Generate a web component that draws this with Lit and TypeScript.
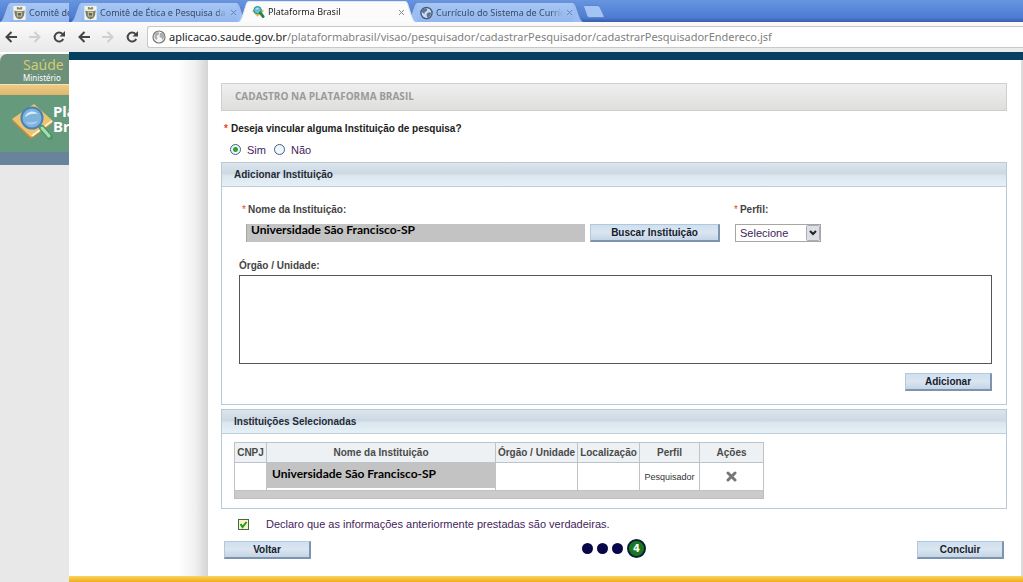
import { LitElement, html, css, svg, nothing } from "lit";
import { customElement, property, state } from "lit/decorators.js";
import { classMap } from "lit/directives/class-map.js";

const crest = html`<svg class="icon" viewBox="0 0 14 16" aria-hidden="true">
  <rect width="14" height="16" fill="#f1f2ea" />
  <path d="M4 1h2v1h2V1h2v3H4z" fill="#8d8a63" />
  <path d="M1 5l3 1h6l3-1-1 6-2 3-3 1-3-1-2-3z" fill="#7b7c6a" />
  <rect x="4" y="7" width="6" height="5" fill="#d9cf8f" />
  <path d="M5 8h4v3H5z" fill="#5b6673" />
</svg>`;

const globe = html`<svg class="icon" viewBox="0 0 14 14" aria-hidden="true">
  <circle cx="7" cy="7" r="6" fill="#c9dcf6" stroke="#46597a" stroke-width="1.5" />
  <path d="M3 3l3-1 2 1-1 2-2 1v2l-2-1-1-2zM8 7l3-1 1 2-2 3-2 1-1-3z" fill="#5e7494" />
</svg>`;

const pageGlobe = html`<svg class="page-icon" viewBox="0 0 14 14" aria-hidden="true">
  <circle cx="7" cy="7" r="6" fill="#f6f6f6" stroke="#777" stroke-width="1.2" />
  <path d="M2.500 4l3-2 2 1-1 2-2 1 1 2-1 2-2-2zM8 3l3 0 1.500 4-2 3-1-2-2-1z" fill="#adadad" />
</svg>`;

const magnifier = svg`
  <path d="M1 17L23 2l19 17-22 16z" fill="#c58c3c" />
  <path d="M1 15L23 0l19 17-22 16z" fill="#ecc470" />
  <path d="M21 32l20-15" stroke="#fff3c8" stroke-width="2" />
  <path d="M31 24l8 9" stroke="#4a9867" stroke-width="6" stroke-linecap="round" />
  <path d="M31 24l7 8" stroke="#a9dcb2" stroke-width="3" stroke-linecap="round" />
  <circle cx="21" cy="14" r="10.500" fill="#7eb3dd" stroke="#4a81b4" stroke-width="2" />
  <path d="M14 13c1-5 8-8 13-3-5-1-9 0-13 3z" fill="#d8ecfa" />
  <path d="M15 18c4 4 9 3 12-1-4 1-8 2-12 1z" fill="#a9d0ee" />`;

const brasil = html`<svg class="icon" viewBox="0 0 14 14" aria-hidden="true">
  <path d="M0 6l6-5 7 5-7 6z" fill="#e7b93f" />
  <circle cx="6" cy="5" r="4" fill="#5fc0d8" stroke="#1f8f88" />
  <path d="M9 8l3 4" stroke="#23824a" stroke-width="3" stroke-linecap="round" />
  <path d="M4 4l3-1" stroke="#e0f6fb" />
</svg>`;

interface Tab {
  title: string;
  icon: unknown;
  active?: boolean;
}

@customElement("browser-window")
export class BrowserWindow extends LitElement {
  @property({ attribute: false }) tabs: Tab[] = [];
  @property() host = "";
  @property() path = "";
  @property({ type: Boolean }) inset = false;

  static styles = css`
    :host { display: flex; flex-direction: column; min-width: 0; overflow: hidden; }
    .strip { display: flex; align-items: flex-end; height: 22px; padding-left: 2px; box-sizing: border-box;
      background: linear-gradient(#6795e0, #4c7bd2 18px, #3c62b0 21px); }
    .inset .strip { padding-left: 0; }
    .tab { display: flex; flex: 0 0 176px; min-width: 0; height: 20px; margin-right: -8px; padding: 0; border: 0; background: none;
      font: 9px/18px "Noto Sans", sans-serif; color: #3a4a63; text-align: left; }
    .tab.active { z-index: 1; height: 21px; color: #222; }
    .edge { flex: 0 0 10px; height: 100%; display: block; }
    .body { flex: 1; min-width: 0; display: flex; align-items: center; height: 100%; box-sizing: border-box;
      border-top: 1px solid #6f92cc; background: linear-gradient(#a5c6f5, #92b6ee); gap: 3px; padding-left: 3px; }
    .active .body { background: #fbfbfb; border-color: #dfe7f3; }
    .icon { flex: 0 0 13px; height: 14px; }
    .name { flex: 1; min-width: 0; overflow: hidden; white-space: nowrap;
      -webkit-mask-image: linear-gradient(to left, transparent, #000 12px); mask-image: linear-gradient(to left, transparent, #000 12px); }
    .x { flex: 0 0 7px; height: 7px; }
    .new { width: 22px; height: 13px; padding: 0; border: 0; margin: 0 0 4px 8px; background: none; flex: none; }
    .new svg { display: block; }
    .bar { display: flex; align-items: center; height: 30px; padding-left: 9px; box-sizing: border-box;
      background: linear-gradient(#fafafa, #e9e9e9); }
    .inset .bar { padding-left: 5px; }
    .nav { padding: 0; border: 0; background: none; width: 12px; height: 12px; margin-right: 12px; flex: none; }
    .nav svg { display: block; }
    .address { flex: 1; min-width: 0; display: flex; align-items: center; height: 22px; box-sizing: border-box;
      margin-left: -3px; padding-left: 4px; background: #fff; border: 1px solid #c9c9c9; border-right: 0; border-radius: 3px 0 0 3px;
      font: 11px/18px "Noto Sans", sans-serif; color: #222; }
    .page-icon { flex: 0 0 14px; height: 14px; margin-right: 3px; }
    .path { flex: 1; min-width: 0; padding: 0; border: 0; outline: 0; background: none; font: inherit; color: #808080; }
    ::slotted(*) { flex: 1; }
  `;

  private renderTab(t: Tab) {
    const fill = t.active ? "#fbfbfb" : "#9bbdf1";
    const line = t.active ? "#dfe7f3" : "#5f83c2";
    return html`<button class=${classMap({ tab: true, active: !!t.active })} role="tab" aria-selected=${t.active ? "true" : "false"}>
      <svg class="edge" viewBox="0 0 10 20" preserveAspectRatio="none" aria-hidden="true">
        <path d="M0 20C2 19 3 16 4 13L7 4Q8 .5 10 .5V20z" fill=${fill} /><path d="M0 20C2 19 3 16 4 13L7 4Q8 .5 10 .5" fill="none" stroke=${line} />
      </svg>
      <span class="body">${t.icon}<span class="name">${t.title}</span>
        <svg class="x" viewBox="0 0 7 7" aria-hidden="true"><path d="M1 1l5 5M6 1L1 6" stroke=${t.active ? "#8b8b8b" : "#6f87ae"} /></svg>
      </span>
      <svg class="edge" viewBox="0 0 10 20" preserveAspectRatio="none" aria-hidden="true">
        <path d="M10 20C8 19 7 16 6 13L3 4Q2 .5 0 .5V20z" fill=${fill} /><path d="M10 20C8 19 7 16 6 13L3 4Q2 .5 0 .5" fill="none" stroke=${line} />
      </svg>
    </button>`;
  }

  render() {
    return html`<div class=${classMap({ inset: this.inset })}>
        <div class="strip" role="tablist">
          ${this.tabs.map((t) => this.renderTab(t))}
          ${this.inset ? nothing : html`<button class="new" aria-label="+">
            <svg width="22" height="13" viewBox="0 0 22 13"><path d="M.5 1.500Q.5.500 2 .5H14Q16 .5 17 2L21 11Q21.500 12.500 20 12.500H6Q4.500 12.500 4 11z" fill="#a3c5f5" stroke="#5f86ca" /></svg>
          </button>`}
        </div>
        <div class="bar">
          <button class="nav" aria-label="←"><svg width="12" height="12" viewBox="0 0 12 12"><path d="M6.500 1L1.500 6l5 5M1.500 6H12" fill="none" stroke="#454545" stroke-width="2" /></svg></button>
          <button class="nav" aria-label="→"><svg width="12" height="12" viewBox="0 0 12 12"><path d="M5.500 1l5 5-5 5M10.500 6H0" fill="none" stroke="#cfcfcf" stroke-width="2" /></svg></button>
          <button class="nav" aria-label="↻"><svg width="12" height="12" viewBox="0 0 12 12"><path d="M9.500 3A4.500 4.500 0 1 0 10.200 8" fill="none" stroke="#454545" stroke-width="2" /><path d="M12 0v5.500H6.500z" fill="#454545" /></svg></button>
          ${this.inset ? nothing : html`<div class="address">${pageGlobe}<label for="path">${this.host}</label><input id="path" class="path" .value=${this.path} /></div>`}
        </div>
      </div>
      <slot></slot>`;
  }
}

@customElement("form-panel")
export class FormPanel extends LitElement {
  @property() heading = "";

  static styles = css`
    :host { display: block; border: 1px solid #b9c9d6; }
    h2 { margin: 0; height: 24px; box-sizing: border-box; padding-left: 12px; border-bottom: 1px solid #bccddb;
      font: bold 10px/23px "Liberation Sans", sans-serif; color: #1f2a36;
      background: linear-gradient(#dce5ec, #ccd8e3 45%, #dbe6ee 55%, #e6f0f7); }
  `;

  render() {
    return html`<h2>${this.heading}</h2><slot></slot>`;
  }
}

@customElement("app-root")
export class AppRoot extends LitElement {
  @state() private link = "sim";

  private backTabs: Tab[] = [{ title: "Comitê de", icon: crest }];
  private tabs: Tab[] = [
    { title: "Comitê de Ética e Pesquisa da", icon: crest },
    { title: "Plataforma Brasil", icon: brasil, active: true },
    { title: "Currículo do Sistema de Currícu", icon: globe },
  ];

  static styles = css`
    :host { display: grid; grid-template-columns: 69px minmax(0, 1fr); min-height: 100vh; background: #fff;
      font: 11px/14px "Liberation Sans", sans-serif; color: #222; }
    * { box-sizing: border-box; }

    .back { display: flex; flex-direction: column; background: #e8e8e8; overflow: hidden; margin-top: 2px; }
    .ministry { display: flex; flex-direction: column; height: 30px; padding: 3px 0 0 23px; background: #6c9079; border-top-left-radius: 7px; color: #fff;
      font: 8px/10px "Noto Sans", sans-serif; white-space: nowrap; }
    .ministry b { font: 14px/16px "Noto Sans", sans-serif; color: #d3cc72; }
    .ribbon { height: 11px; background: linear-gradient(#edcb85, #e0b66c); border-top: 1px solid #f0e2bd; }
    .brand { display: flex; height: 57px; padding: 9px 0 0 11px; background: #669a7c; color: #fff;
      font: bold 15px/15px "Noto Sans", sans-serif; }
    .brand svg { flex: 0 0 42px; height: 38px; }
    .stripe { height: 13px; background: #68849b; }

    .page { display: flex; flex-direction: column; border-top: 8px solid #073f61; }
    .columns { flex: 1; display: grid; grid-template-columns: 139px minmax(0, 1fr); }
    .side { background: linear-gradient(to left, #d4d4d4, #efefef 12px, #fff 30px); }
    .sheet { border-right: 2px solid #dcdcdc; padding: 23px 14px 14px 13px; background: #fff; }
    .gold { height: 6px; background: linear-gradient(#fbd55c, #f0ac1c); }

    h1 { margin: 0; height: 28px; padding-left: 13px; border: 1px solid #cfcfcf; background: linear-gradient(#efefef, #dededc);
      font: bold 10px/25px "Open Sans", sans-serif; color: #9a9a9a; }
    fieldset { margin: 10px 0 0; padding: 0; border: 0; }
    legend { padding: 0; font: bold 10px/16px "Liberation Sans", sans-serif; color: #1c1c1c; }
    .star { color: #e8442a; margin: 0 3px; }
    .radios { display: flex; gap: 8px; height: 25px; padding: 1px 0 0 9px; }
    .radios label { display: flex; align-items: center; gap: 6px; color: #43245c; height: 24px; }
    input[type="radio"] { appearance: none; width: 11px; height: 11px; margin: 0 0 2px; border: 1px solid #39648a; border-radius: 50%; background: #f2f6f8; }
    input[type="radio"]:checked { background: radial-gradient(circle, #2fa52f 2px, #f2f6f8 3px); }

    .entry { padding: 15px 14px 13px 17px; }
    .fields { display: flex; align-items: flex-end; }
    .field { display: flex; flex-direction: column; gap: 6px; }
    .field label, .unit { font: bold 10px/16px "Liberation Sans", sans-serif; color: #444; }
    .field .star { margin-right: 2px; font-weight: normal; }
    .grow { flex: 0 1 346px; min-width: 0; }
    .institution { height: 18px; margin-left: 7px; padding: 0 4px 8px; border: 0; border-left: 1px solid #a6a6a6; border-radius: 0; background: #c3c3c3;
      font: bold 12px/10px Lato, sans-serif; color: #000; min-width: 0; }
    .profile { margin-left: 13px; }
    .profile label { margin-left: -2px; }
    .picker { display: grid; width: 86px; margin-left: 2px; }
    select, .picker svg { grid-area: 1 / 1; }
    select { appearance: none; height: 18px; width: 100%; padding: 0 0 0 4px; border: 1px solid #aaa5a0; border-radius: 0; background: #fff;
      font: 11px/14px "Liberation Sans", sans-serif; color: #43245c; }
    .picker svg { justify-self: end; margin: 1px; pointer-events: none; }
    .unit { display: block; margin-top: 16px; }
    textarea { display: block; width: 100%; height: 89px; margin-top: 1px; border: 1px solid #555; border-radius: 0; resize: none; background: #fff; }
    .btn { width: 87px; height: 18px; padding: 0; border: 1px solid #b4c8dc; border-right: 2px solid #7d93af; border-bottom: 2px solid #7d93af; border-radius: 0;
      background: linear-gradient(#cfe0f1, #dae5f0 50%, #c4d5e6); font: bold 10px/14px "Liberation Sans", sans-serif; color: #16202c; }
    .btn.wide { width: 130px; margin-left: 5px; }
    .actions { display: flex; justify-content: flex-end; margin-top: 9px; }

    .second { margin-top: 4px; }
    .list { padding: 8px 12px 9px; }
    table { border-collapse: collapse; table-layout: fixed; width: 529px; font: 9px/12px "Liberation Sans", sans-serif; color: #333; text-align: center; }
    th, td { border: 1px solid #bcc3c9; padding: 0; }
    th { height: 20px; background: #edf1f4; font: bold 10px/12px "Liberation Sans", sans-serif; color: #4a4a4a; white-space: nowrap; }
    tbody td { height: 28px; background: #fff; vertical-align: middle; }
    tfoot td { height: 8px; background: #cbcbcb; border-color: #bdbdbd; }
    .name { display: block; height: 25px; margin-bottom: 2px; padding-left: 5px; background: #c3c3c3; text-align: left;
      font: bold 12px/22px Lato, sans-serif; color: #000; }
    .remove { display: block; width: 11px; height: 11px; margin: 0 auto; padding: 0; border: 0; background: none; }
    .remove svg { display: block; }
    .c1 { width: 32px; } .c2 { width: 229px; } .c3 { width: 82px; } .c4 { width: 62px; } .c5 { width: 60px; } .c6 { width: 64px; }

    .declare { display: flex; align-items: center; gap: 17px; height: 30px; padding-left: 17px; font: 11px/14px "Liberation Sans", sans-serif; color: #43245c; }
    input[type="checkbox"] { appearance: none; width: 11px; height: 11px; margin: 0; border: 1px solid #3f6b4b; background: #fbf3c4; }
    .tick { display: grid; }
    .tick > * { grid-area: 1 / 1; }
    .tick svg { pointer-events: none; visibility: hidden; }
    .tick input:checked + svg { visibility: visible; }
    .foot { display: grid; grid-template-columns: 1fr auto 1fr; align-items: end; height: 20px; padding: 0 3px; }
    .foot .btn:last-child { justify-self: end; }
    .steps { display: flex; align-items: center; gap: 4px; list-style: none; margin: 0; padding: 0; align-self: start; }
    .steps li { width: 11px; height: 11px; border-radius: 50%; background: #07064a; }
    .steps .current { width: 19px; height: 19px; border: 2px solid #0a1f3c; background: #187a1c; color: #fff; text-align: center;
      font: bold 10px/15px "DejaVu Sans", sans-serif; }
  `;

  render() {
    return html`
      <browser-window inset .tabs=${this.backTabs}>
        <div class="back">
          <div class="ministry"><b>Saúde</b><span>Ministério</span></div>
          <div class="ribbon"></div>
          <div class="brand"><svg viewBox="0 0 42 38" fill="none" aria-hidden="true">${magnifier}</svg><span>Plataforma<br />Brasil</span></div>
          <div class="stripe"></div>
        </div>
      </browser-window>
      <browser-window .tabs=${this.tabs} host="aplicacao.saude.gov.br"
        path="/plataformabrasil/visao/pesquisador/cadastrarPesquisador/cadastrarPesquisadorEndereco.jsf">
        <div class="page">
          <div class="columns">
            <div class="side"></div>
            <main class="sheet">
              <h1>CADASTRO NA PLATAFORMA BRASIL</h1>
              <fieldset>
                <legend><span class="star">*</span>Deseja vincular alguma Instituição de pesquisa?</legend>
                <div class="radios">
                  ${[["sim", "Sim"], ["nao", "Não"]].map(([v, t]) => html`<label><input type="radio" name="link" .checked=${this.link === v} @change=${() => (this.link = v)} />${t}</label>`)}
                </div>
              </fieldset>
              <form-panel heading="Adicionar Instituição">
                <div class="entry">
                  <div class="fields">
                    <div class="field grow">
                      <label for="inst"><span class="star">*</span>Nome da Instituição:</label>
                      <input id="inst" class="institution" readonly value="Universidade São Francisco-SP" />
                    </div>
                    <button class="btn wide">Buscar Instituição</button>
                    <div class="field profile">
                      <label for="perfil"><span class="star">*</span>Perfil:</label>
                      <div class="picker">
                        <select id="perfil"><option>Selecione</option><option>Pesquisador</option></select>
                        <svg width="14" height="16" viewBox="0 0 14 16" aria-hidden="true"><rect x=".5" y=".5" width="13" height="15" rx="1" fill="#dcdfe6" stroke="#a9adb8" /><path d="M4 6l3 3 3-3" fill="none" stroke="#222" stroke-width="2" /></svg>
                      </div>
                    </div>
                  </div>
                  <label class="unit" for="unit">Órgão / Unidade:</label>
                  <textarea id="unit"></textarea>
                  <div class="actions"><button class="btn">Adicionar</button></div>
                </div>
              </form-panel>
              <form-panel class="second" heading="Instituições Selecionadas">
                <div class="list">
                  <table>
                    <colgroup><col class="c1" /><col class="c2" /><col class="c3" /><col class="c4" /><col class="c5" /><col class="c6" /></colgroup>
                    <thead><tr><th>CNPJ</th><th>Nome da Instituição</th><th>Órgão / Unidade</th><th>Localização</th><th>Perfil</th><th>Ações</th></tr></thead>
                    <tbody><tr>
                      <td></td><td><span class="name">Universidade São Francisco-SP</span></td><td></td><td></td><td>Pesquisador</td>
                      <td><button class="remove" aria-label="×"><svg width="11" height="11" viewBox="0 0 11 11"><path d="M2 2l7 7M9 2L2 9" stroke="#777" stroke-width="3" stroke-linecap="round" /></svg></button></td>
                    </tr></tbody>
                    <tfoot><tr><td colspan="6"></td></tr></tfoot>
                  </table>
                </div>
              </form-panel>
              <div class="declare">
                <span class="tick"><input id="true" type="checkbox" checked /><svg width="11" height="11" viewBox="0 0 11 11" aria-hidden="true"><path d="M2.500 5l2 3 4-5" fill="none" stroke="#1f9a2b" stroke-width="2" /></svg></span>
                <label for="true">Declaro que as informações anteriormente prestadas são verdadeiras.</label>
              </div>
              <div class="foot">
                <button class="btn">Voltar</button>
                <ol class="steps"><li></li><li></li><li></li><li class="current">4</li></ol>
                <button class="btn">Concluir</button>
              </div>
            </main>
          </div>
          <div class="gold"></div>
        </div>
      </browser-window>
    `;
  }
}
